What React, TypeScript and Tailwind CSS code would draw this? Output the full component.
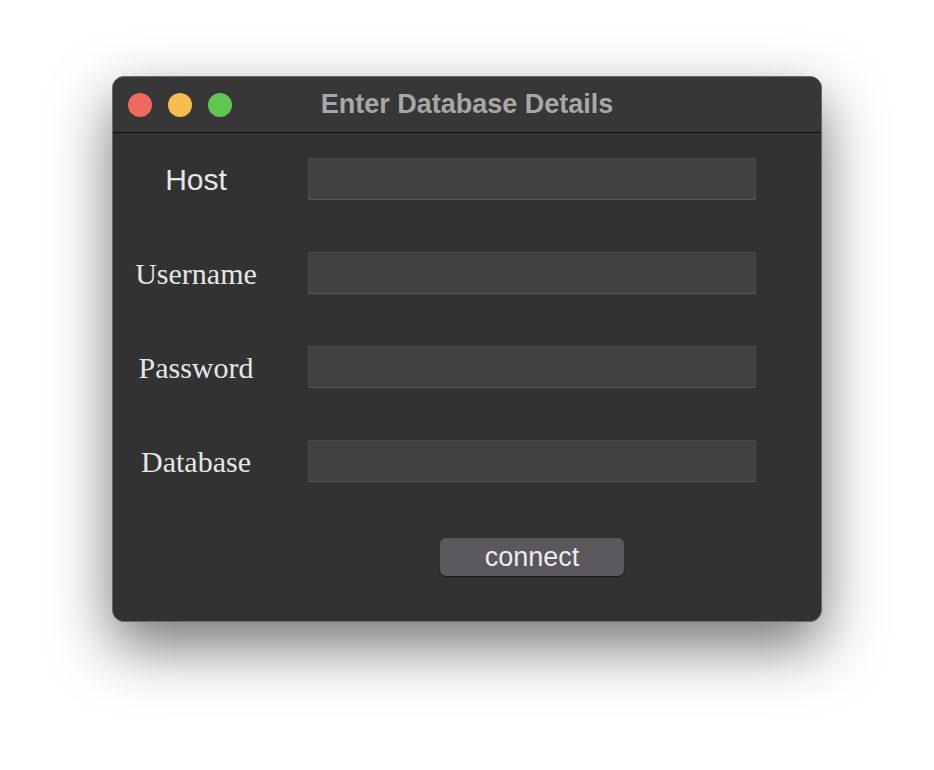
const fields = ['Username', 'Password', 'Database'];

const Field = ({ label, serif }: { label: string; serif?: boolean }) => (
  <div className="flex h-[42px] items-center">
    <div
      className={
        serif
          ? "w-[166px] pt-[2px] text-center text-[30px] leading-none text-[#e6e6e6] [font-family:'Liberation_Serif',serif]"
          : "w-[166px] pt-[2px] text-center text-[30px] leading-none text-[#e6e6e6] [font-family:'Liberation_Sans',sans-serif]"
      }
    >
      {label}
    </div>
    <div className="ml-[29px] h-[42px] w-[448px] border border-[#4a4a4a] border-b-[#575757] bg-[#414141]" />
  </div>
);

export default function App() {
  return (
    <div className="h-[770px] w-[934px] bg-white pl-[112px] pt-[76px]">
      <div className="flex h-[546px] w-[710px] flex-col overflow-hidden rounded-[12px] border border-[#6a6a6a] bg-[#323232] shadow-[0_24px_60px_rgba(0,0,0,0.55)]">
        <div className="relative flex h-[56px] shrink-0 items-center border-b border-[#111] bg-[#363736] px-[15px]">
          <div className="flex gap-[16px]">
            <span className="h-[24px] w-[24px] rounded-full bg-[#ee6a5f]" />
            <span className="h-[24px] w-[24px] rounded-full bg-[#f5bf4f]" />
            <span className="h-[24px] w-[24px] rounded-full bg-[#61c554]" />
          </div>
          <div className="absolute inset-x-0 top-0 flex h-[54px] items-center justify-center text-[27px] font-bold text-[#a7a7a7] [font-family:'Liberation_Sans',sans-serif]">
            Enter Database Details
          </div>
        </div>
        <div className="flex flex-col gap-[52px] pt-[25px]">
          <Field label="Host" />
          {fields.map((f) => (
            <Field key={f} label={f} serif />
          ))}
        </div>
        <div className="flex pl-[327px] pt-[56px]">
          <button className="flex h-[38px] w-[184px] items-center justify-center rounded-[6px] bg-[#5a585d] text-[27px] leading-none text-[#ececec] shadow-[0_1px_1px_rgba(0,0,0,0.6)] [font-family:'Liberation_Sans',sans-serif]">
            connect
          </button>
        </div>
      </div>
    </div>
  );
}
